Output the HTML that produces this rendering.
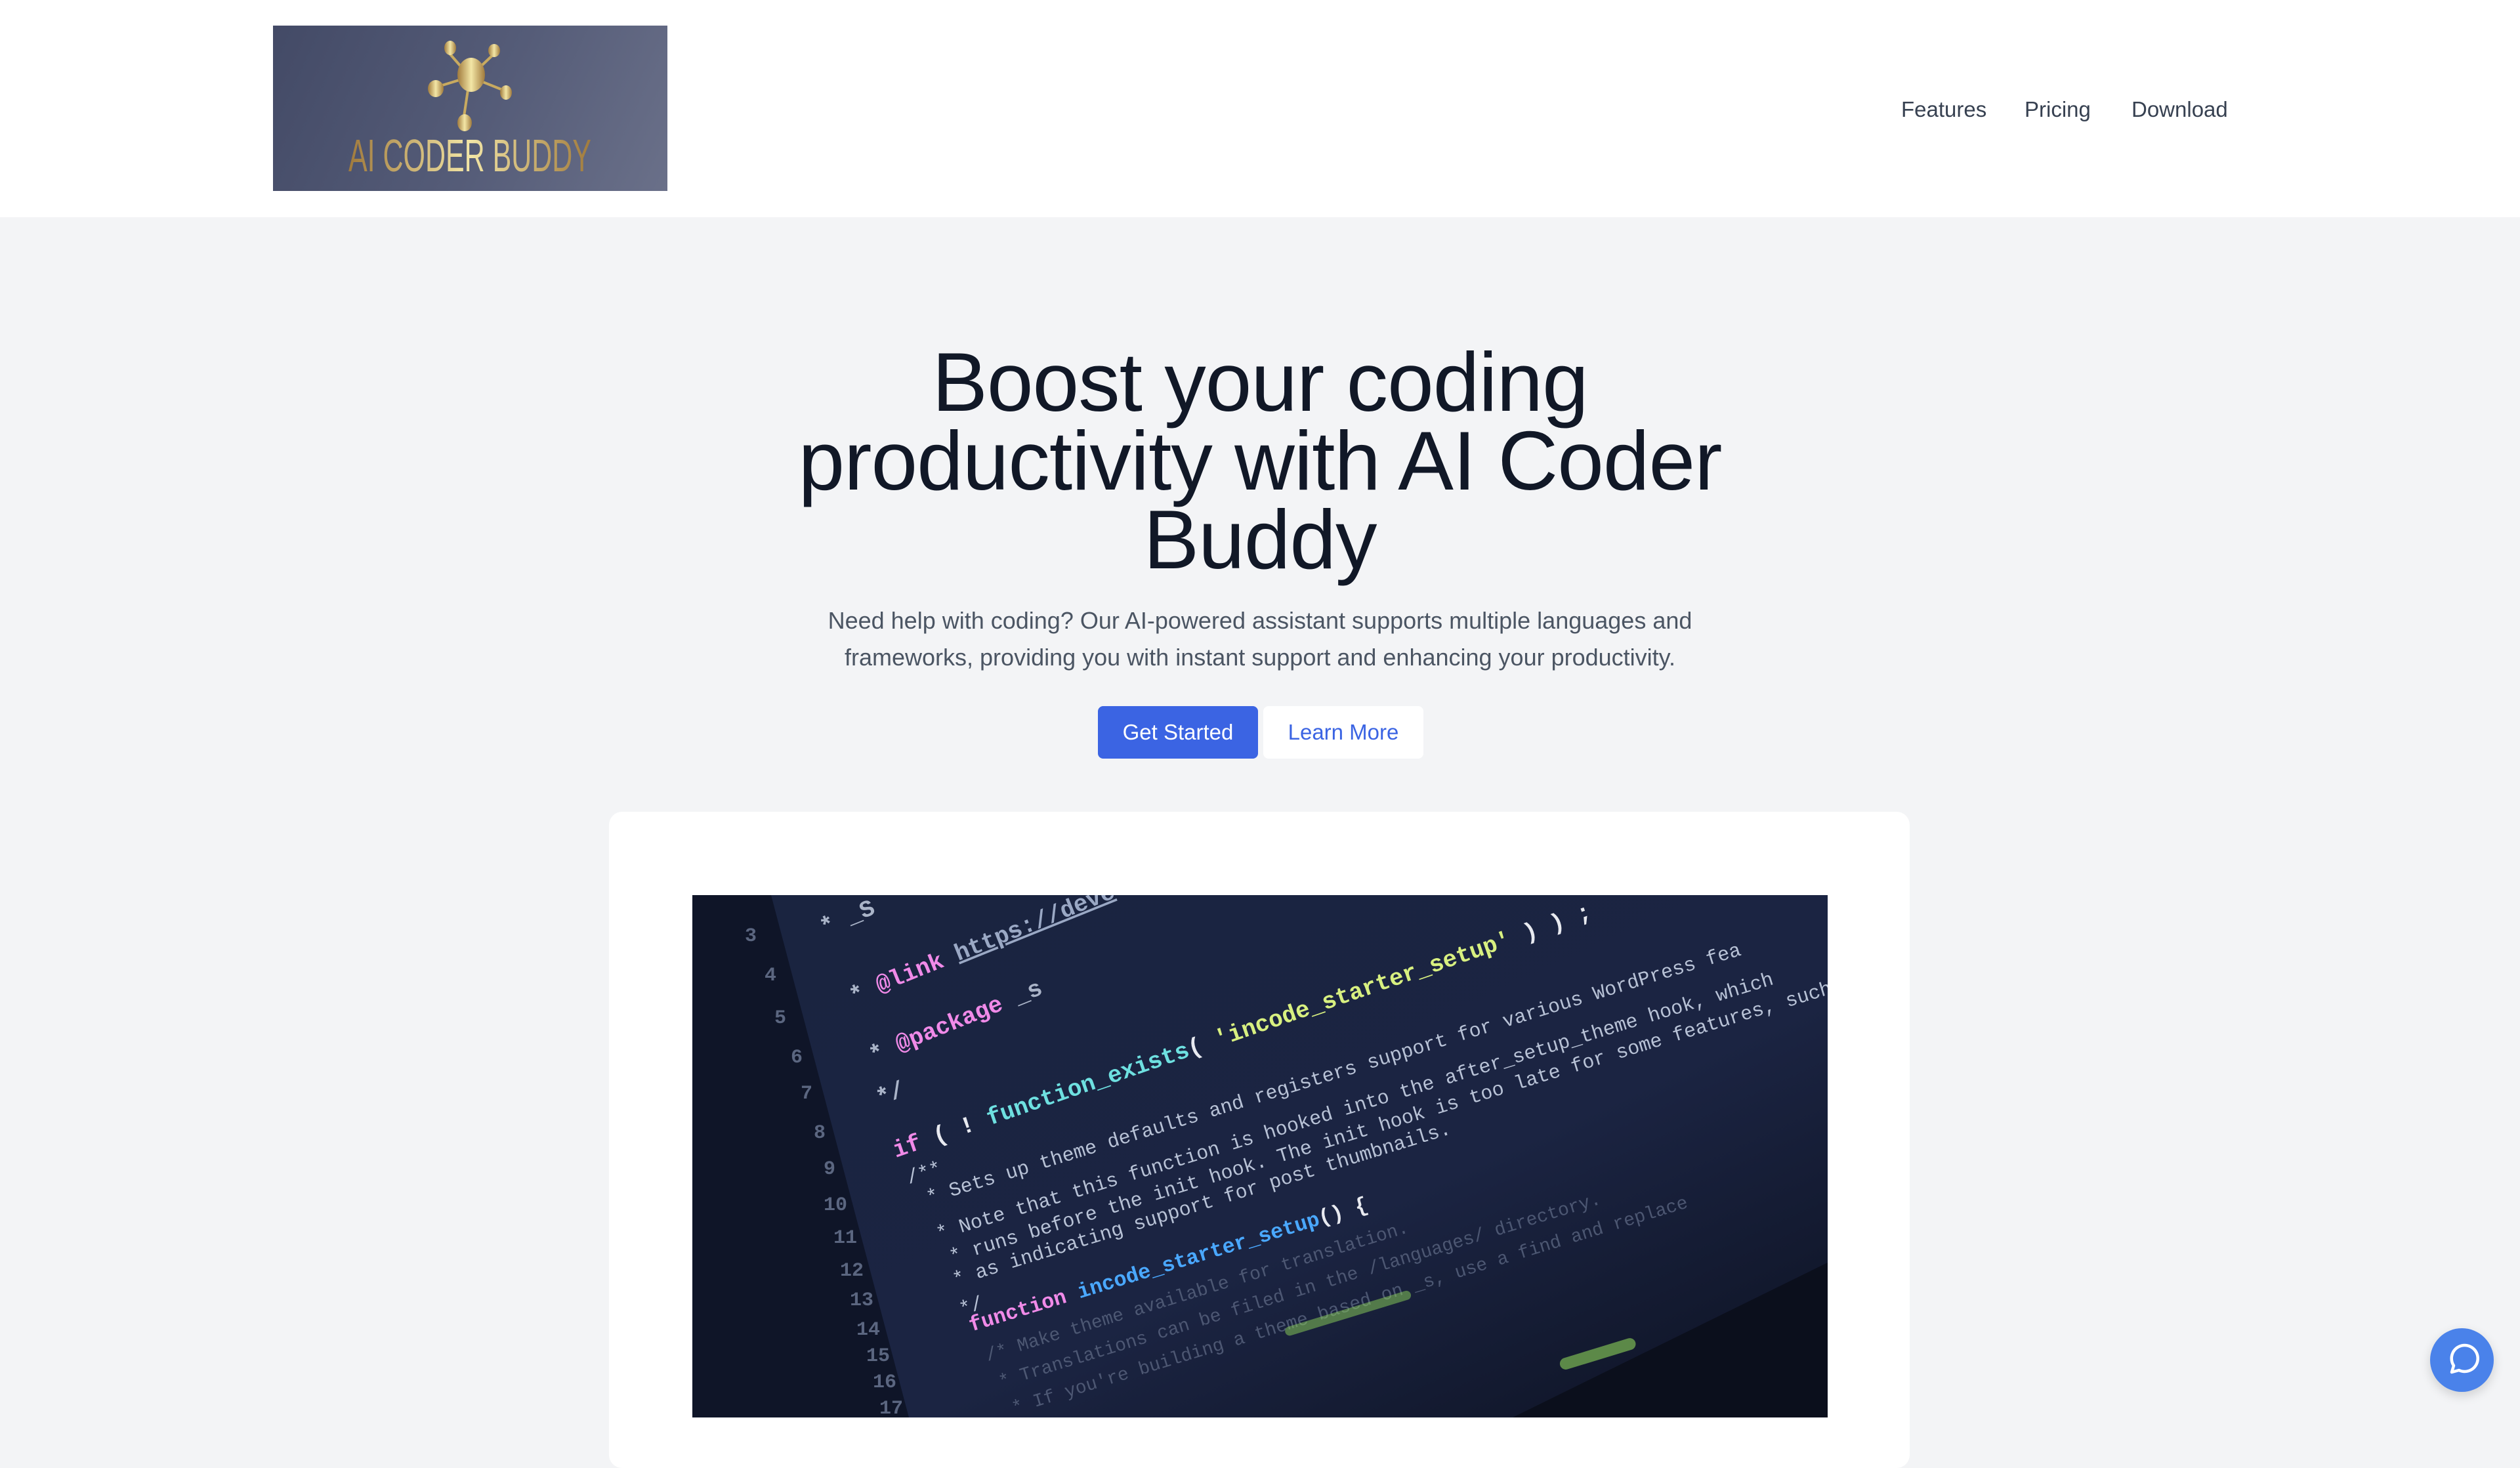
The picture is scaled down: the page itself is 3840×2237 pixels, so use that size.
<!DOCTYPE html>
<html><head><meta charset="utf-8"><style>
*{margin:0;padding:0;box-sizing:border-box}
html,body{width:3840px;height:2160px;overflow:hidden;background:#f3f4f6;font-family:"Liberation Sans",sans-serif}
header{position:absolute;left:0;top:0;width:3840px;height:331px;background:#fff}
.logo{position:absolute;left:416px;top:39px;width:601px;height:252px;background:linear-gradient(115deg,#434a66 0%,#555c78 55%,#6a7089 100%);overflow:hidden}
nav a{position:absolute;top:148px;font-size:33px;color:#374151;text-decoration:none}
h1{position:absolute;left:0;width:3840px;top:522px;text-align:center;font-size:127px;line-height:120px;font-weight:400;color:#111827;letter-spacing:-1px;white-space:nowrap}
p.sub{position:absolute;left:0;width:3840px;top:918px;text-align:center;font-size:36px;line-height:56px;color:#4b5563;white-space:nowrap}
.btn{position:absolute;top:1076px;height:80px;width:244px;border-radius:8px;font-size:33px;line-height:80px;text-align:center}
.b1{left:1673px;background:#3b64e3;color:#fff}
.b2{left:1925px;background:#fff;color:#3b64e3}
.card{position:absolute;left:928px;top:1237px;width:1982px;height:1000px;background:#fff;border-radius:20px}
.img{position:absolute;left:1055px;top:1364px;width:1730px;height:796px;overflow:hidden;background:#16203a}
.chat{position:absolute;left:3703px;top:2024px;width:97px;height:97px;border-radius:50%;background:#4a82ea;box-shadow:0 6px 16px rgba(0,0,0,.15)}
</style></head><body>
<header>
<div class="logo">
<svg width="601" height="252" viewBox="0 0 601 252">
<defs><linearGradient id="g" x1="0" x2="1"><stop offset="0" stop-color="#a07a3c"/><stop offset=".5" stop-color="#f3e6a6"/><stop offset="1" stop-color="#a07a3c"/></linearGradient></defs>
<g stroke="#c8aa60" stroke-width="4">
<line x1="300" y1="78" x2="265" y2="38"/><line x1="300" y1="78" x2="340" y2="40"/><line x1="300" y1="78" x2="248" y2="94"/><line x1="300" y1="78" x2="355" y2="100"/><line x1="300" y1="78" x2="290" y2="145"/>
</g>
<ellipse cx="302" cy="75" rx="21" ry="26" fill="url(#g)"/>
<ellipse cx="270" cy="34" rx="9" ry="11" fill="url(#g)"/>
<ellipse cx="337" cy="38" rx="9" ry="10" fill="url(#g)"/>
<ellipse cx="248" cy="96" rx="12" ry="13" fill="url(#g)"/>
<ellipse cx="355" cy="102" rx="9" ry="11" fill="url(#g)"/>
<ellipse cx="292" cy="148" rx="11" ry="13" fill="url(#g)"/>
<text x="115" y="222" font-family="Liberation Sans Narrow,Liberation Sans,sans-serif" font-size="70" fill="url(#g)" textLength="370" lengthAdjust="spacingAndGlyphs">AI CODER BUDDY</text>
</svg>
</div>
<nav><a style="left:2897px">Features</a><a style="left:3085px">Pricing</a><a style="left:3248px">Download</a></nav>
</header>
<h1>Boost your coding<br>productivity with AI Coder<br>Buddy</h1>
<p class="sub">Need help with coding? Our AI-powered assistant supports multiple languages and<br>frameworks, providing you with instant support and enhancing your productivity.</p>
<div class="btn b1">Get Started</div>
<div class="btn b2">Learn More</div>
<div class="card"></div>
<div class="img">
<svg width="1730" height="796" viewBox="0 0 1730 796" font-family="Liberation Mono,monospace" font-weight="bold">
<defs><linearGradient id="bg" x1="0" y1="0" x2="1" y2="1"><stop offset="0" stop-color="#1a2440"/><stop offset=".6" stop-color="#1b2442"/><stop offset="1" stop-color="#0d1222"/></linearGradient></defs>
<rect width="1730" height="796" fill="url(#bg)"/>
<polygon points="0,0 120,0 330,796 0,796" fill="#0f1528"/>
<polygon points="1250,796 1730,560 1730,796" fill="#0b0f1c"/>
<g fill="#5b6680" font-size="30">
<text x="80" y="70">3</text><text x="110" y="130">4</text><text x="125" y="195">5</text><text x="150" y="255">6</text><text x="165" y="310">7</text><text x="185" y="370">8</text><text x="200" y="425">9</text><text x="200" y="480">10</text><text x="215" y="530">11</text><text x="225" y="580">12</text><text x="240" y="625">13</text><text x="250" y="670">14</text><text x="265" y="710">15</text><text x="275" y="750">16</text><text x="285" y="790">17</text>
</g>
<g font-size="36">
<text transform="translate(200,60) rotate(-22)" fill="#aab4c8">* _S</text>
<text transform="translate(245,165) rotate(-22)"><tspan fill="#aab4c8">* </tspan><tspan fill="#f08ae8">@link </tspan><tspan fill="#9aa8c4" text-decoration="underline">https://deve</tspan></text>
<text transform="translate(275,255) rotate(-22)"><tspan fill="#aab4c8">* </tspan><tspan fill="#f08ae8">@package</tspan><tspan fill="#aab4c8"> _s</tspan></text>
<text transform="translate(285,320) rotate(-20)" fill="#aab4c8">*/</text>
<text transform="translate(310,400) rotate(-19)"><tspan fill="#f08ae8">if</tspan><tspan fill="#e8eaf0"> ( ! </tspan><tspan fill="#6ee0e0">function_exists</tspan><tspan fill="#e8eaf0">( </tspan><tspan fill="#d8f080">'incode_starter_setup'</tspan><tspan fill="#e8eaf0"> ) ) ;</tspan></text>
</g>
<g font-size="30" fill="#b8c2d6" font-weight="normal">
<text transform="translate(330,440) rotate(-18)">/**</text>
<text transform="translate(360,470) rotate(-17)">* Sets up theme defaults and registers support for various WordPress fea</text>
<text transform="translate(375,525) rotate(-17)">* Note that this function is hooked into the after_setup_theme hook, which</text>
<text transform="translate(395,560) rotate(-17)">* runs before the init hook. The init hook is too late for some features, such</text>
<text transform="translate(400,595) rotate(-17)">* as indicating support for post thumbnails.</text>
<text transform="translate(410,640) rotate(-17)">*/</text>
</g>
<text transform="translate(425,665) rotate(-17)" font-size="32"><tspan fill="#f08ae8">function </tspan><tspan fill="#4aa8ff">incode_starter_setup</tspan><tspan fill="#e8eaf0">() {</tspan></text>
<g font-size="28" fill="#5a6580" font-weight="normal" opacity=".8">
<text transform="translate(450,710) rotate(-17)">/* Make theme available for translation.</text>
<text transform="translate(470,750) rotate(-17)">* Translations can be filed in the /languages/ directory.</text>
<text transform="translate(490,790) rotate(-17)">* If you're building a theme based on _s, use a find and replace</text>
</g>
<rect x="1320" y="690" width="120" height="18" rx="9" fill="#8ed45a" opacity=".6" transform="rotate(-17 1380 700)"/>
<rect x="900" y="630" width="200" height="14" rx="7" fill="#8ed45a" opacity=".5" transform="rotate(-17 1000 640)"/>
</svg>
</div>
<div class="chat"><svg width="97" height="97" viewBox="0 0 97 97"><path d="M33 67 L36 57 A20 20 0 1 1 44 64 Z" fill="none" stroke="#fff" stroke-width="4.5" stroke-linejoin="round"/></svg></div>
</body></html>
